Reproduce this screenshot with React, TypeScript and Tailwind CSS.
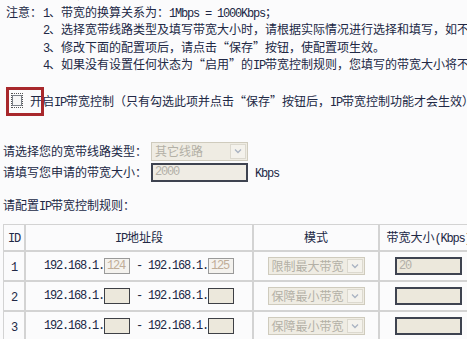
import React from "react";

// half-width latin runs, sized like the old bitmap song font (6px per char)
const M = ({ children }: { children: React.ReactNode }) => (
  <span className="font-['Liberation_Mono',monospace] text-[12px] leading-none tracking-[-1.2px]">{children}</span>
);

const Chevron = () => (
  <svg width="8" height="6" viewBox="0 0 8 6">
    <path d="M1 1.5l3 3 3-3" fill="none" stroke="#a9b3c2" strokeWidth="1.3" />
  </svg>
);

function FakeSelect({ text, className }: { text: string; className: string }) {
  return (
    <div className={"flex items-stretch border border-[#cfcbbd] bg-[#efece3] " + className}>
      <div className="flex-1 pl-[3px] text-[#b3b0a6] leading-none flex items-center whitespace-nowrap overflow-hidden">{text}</div>
      <div className="w-[16px] m-[1px] border border-[#dcd9cf] bg-[#f4f2ec] flex items-center justify-center">
        <Chevron />
      </div>
    </div>
  );
}

function IpBox({ value }: { value?: string }) {
  return value ? (
    <div className="w-[26px] h-[16px] border border-[#9a9a9a] bg-[#f4f2ee] text-[#c0ad98] flex items-center pl-[2px]">
      <M>{value}</M>
    </div>
  ) : (
    <div className="w-[26px] h-[16px] border border-[#3d3f45] bg-[#ece8dc]" />
  );
}

const rules = [
  { id: "1", from: "124", to: "125", mode: "限制最大带宽", bw: "20" },
  { id: "2", from: "", to: "", mode: "保障最小带宽", bw: "" },
  { id: "3", from: "", to: "", mode: "保障最小带宽", bw: "" },
];

export default function App() {
  return (
    <div className="relative w-[467px] h-[339px] overflow-hidden bg-[#fbfbfc] text-[#212845] text-[12px] font-['Noto_Sans_CJK_SC',sans-serif]">
      {/* notes */}
      <div className="-mt-[15px] leading-[17.5px] whitespace-nowrap">
        <div className="h-[17.5px] pl-[5px]">
          本页设置<M>IP</M>带宽控制的相关参数。
        </div>
        <div className="flex pl-[6px]">
          <div className="w-[37px] shrink-0">注意：</div>
          <div>
            <div className="h-[17.5px]">
              <M>1</M>、带宽的换算关系为：<M>1Mbps = 1000Kbps</M>；
            </div>
            <div className="h-[17.5px]">
              <M>2</M>、选择宽带线路类型及填写带宽大小时，请根据实际情况进行选择和填写，如不清楚，请咨询您的宽带服务提供商。
            </div>
            <div className="h-[17.5px]">
              <M>3</M>、修改下面的配置项后，请点击“保存”按钮，使配置项生效。
            </div>
            <div className="h-[17.5px]">
              <M>4</M>、如果没有设置任何状态为“启用”的<M>IP</M>带宽控制规则，您填写的带宽大小将不起作用。
            </div>
          </div>
        </div>
      </div>

      {/* enable checkbox */}
      <div className="mt-[19px] h-[18px] flex items-center whitespace-nowrap">
        <div className="ml-[11px] w-[13px] h-[15px] border border-dotted border-[#555] flex items-center justify-center">
          <div className="w-[10px] h-[11px] border border-[#7a7f88] bg-[#f6f6f6]" />
        </div>
        <div className="ml-[7px] h-[18px] leading-[18px]">
          开启<M>IP</M>带宽控制（只有勾选此项并点击“保存”按钮后，<M>IP</M>带宽控制功能才会生效）
        </div>
      </div>

      {/* line settings */}
      <div className="mt-[31px] pl-[3px] whitespace-nowrap">
        <div className="h-[21px] flex items-center">
          <div className="w-[148px]">请选择您的宽带线路类型：</div>
          <FakeSelect text="其它线路" className="w-[97px] h-[19px]" />
        </div>
        <div className="h-[21px] flex items-center">
          <div className="w-[148px]">请填写您申请的带宽大小：</div>
          <div className="w-[97px] h-[19px] border-2 border-[#3e4350] bg-[#efece4] text-[#b3b0a8] flex items-center pl-[2px]">
            <M>2000</M>
          </div>
          <div className="ml-[7px]">
            <M>Kbps</M>
          </div>
        </div>
      </div>

      <div className="mt-[13px] h-[18px] leading-[18px] pl-[3px]">
        请配置<M>IP</M>带宽控制规则：
      </div>

      {/* rules table */}
      <table className="mt-[10px] ml-[3px] w-[475px] table-fixed border-separate border-spacing-0">
        <colgroup>
          <col className="w-[22px]" />
          <col className="w-[228px]" />
          <col className="w-[126px]" />
          <col className="w-[99px]" />
        </colgroup>
        <thead>
          <tr className="h-[27px]">
            <th className="border border-[#d3d3d3] font-normal text-center p-0">
              <M>ID</M>
            </th>
            <th className="border border-[#d3d3d3] font-normal text-center p-0">
              <M>IP</M>地址段
            </th>
            <th className="border border-[#d3d3d3] font-normal text-center p-0">模式</th>
            <th className="border border-[#d3d3d3] font-normal text-center p-0 whitespace-nowrap">
              带宽大小<M>(Kbps)</M>
            </th>
          </tr>
        </thead>
        <tbody>
          {rules.map((r) => (
            <tr key={r.id} className="h-[30px]">
              <td className="border border-[#d3d3d3] text-center p-0">
                <M>{r.id}</M>
              </td>
              <td className="border border-[#d3d3d3] p-0">
                <div className="flex items-center justify-center whitespace-pre">
                  <M>192.168.1.</M>
                  <IpBox value={r.from} />
                  <M>{" - "}</M>
                  <M>192.168.1.</M>
                  <IpBox value={r.to} />
                </div>
              </td>
              <td className="border border-[#d3d3d3] p-0">
                <div className="flex justify-center">
                  <FakeSelect text={r.mode} className="w-[97px] h-[18px]" />
                </div>
              </td>
              <td className="border border-[#d3d3d3] p-0">
                <div className="flex justify-center">
                  <div className="w-[67px] h-[18px] border-2 border-[#3e4350] bg-[#ece8dc] text-[#b3b0a8] flex items-center pl-[2px]">
                    <M>{r.bw}</M>
                  </div>
                </div>
              </td>
            </tr>
          ))}
        </tbody>
      </table>

      {/* red annotation round the checkbox */}
      <div className="absolute left-[6px] top-[87px] w-[38px] h-[29px] border-[3px] border-[#a8282c] pointer-events-none" />
    </div>
  );
}
